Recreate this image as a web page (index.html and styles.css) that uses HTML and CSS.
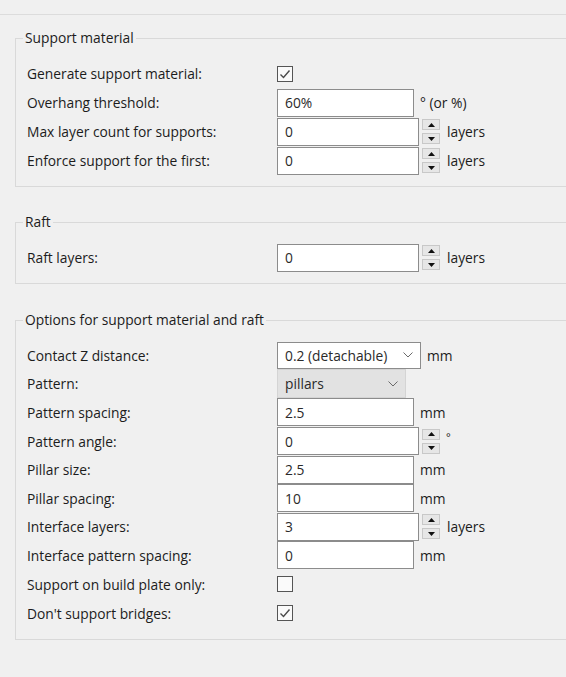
FILE: index.html
```html
<!DOCTYPE html>
<html>
<head>
<meta charset="utf-8">
<link rel="stylesheet" href="styles.css">
</head>
<body>
<div class="topbar"></div>
<main class="page">
  <fieldset class="group g1">
    <legend>Support material</legend>
    <div class="row"><span class="label">Generate support material:</span><span class="ctrl"><span class="check"><svg width="14" height="14" viewBox="0 0 14 14"><path d="M2.5 7.5 L5.5 10.5 L11.5 3.5" fill="none" stroke="#4a4a4a" stroke-width="1.4"/></svg></span></span></div>
    <div class="row"><span class="label">Overhang threshold:</span><span class="ctrl"><span class="field">60%</span><span class="unit">° (or %)</span></span></div>
    <div class="row"><span class="label">Max layer count for supports:</span><span class="ctrl"><span class="field wide">0</span><span class="spin"><b><svg width="7" height="4" viewBox="0 0 7 4"><path d="M0 4 L3.5 0 L7 4Z" fill="#111"/></svg></b><b><svg width="7" height="4" viewBox="0 0 7 4"><path d="M0 0 L3.5 4 L7 0Z" fill="#111"/></svg></b></span><span class="unit">layers</span></span></div>
    <div class="row"><span class="label">Enforce support for the first:</span><span class="ctrl"><span class="field wide">0</span><span class="spin"><b><svg width="7" height="4" viewBox="0 0 7 4"><path d="M0 4 L3.5 0 L7 4Z" fill="#111"/></svg></b><b><svg width="7" height="4" viewBox="0 0 7 4"><path d="M0 0 L3.5 4 L7 0Z" fill="#111"/></svg></b></span><span class="unit">layers</span></span></div>
  </fieldset>

  <fieldset class="group g2">
    <legend>Raft</legend>
    <div class="row"><span class="label">Raft layers:</span><span class="ctrl"><span class="field wide">0</span><span class="spin"><b><svg width="7" height="4" viewBox="0 0 7 4"><path d="M0 4 L3.5 0 L7 4Z" fill="#111"/></svg></b><b><svg width="7" height="4" viewBox="0 0 7 4"><path d="M0 0 L3.5 4 L7 0Z" fill="#111"/></svg></b></span><span class="unit">layers</span></span></div>
  </fieldset>

  <fieldset class="group g3">
    <legend>Options for support material and raft</legend>
    <div class="row tight"><span class="label">Contact Z distance:</span><span class="ctrl"><span class="select">0.2 (detachable)<svg width="10" height="6" viewBox="0 0 10 6"><path d="M0.5 0.5 L5 5 L9.5 0.5" fill="none" stroke="#6a6a6a" stroke-width="1"/></svg></span><span class="unit">mm</span></span></div>
    <div class="row tight"><span class="label">Pattern:</span><span class="ctrl"><span class="select flat">pillars<svg width="10" height="6" viewBox="0 0 10 6"><path d="M0.5 0.5 L5 5 L9.5 0.5" fill="none" stroke="#6a6a6a" stroke-width="1"/></svg></span></span></div>
    <div class="row tight"><span class="label">Pattern spacing:</span><span class="ctrl"><span class="field">2.5</span><span class="unit">mm</span></span></div>
    <div class="row tight"><span class="label">Pattern angle:</span><span class="ctrl"><span class="field wide">0</span><span class="spin"><b><svg width="7" height="4" viewBox="0 0 7 4"><path d="M0 4 L3.5 0 L7 4Z" fill="#111"/></svg></b><b><svg width="7" height="4" viewBox="0 0 7 4"><path d="M0 0 L3.5 4 L7 0Z" fill="#111"/></svg></b></span><span class="unit deg">°</span></span></div>
    <div class="row tight"><span class="label">Pillar size:</span><span class="ctrl"><span class="field">2.5</span><span class="unit">mm</span></span></div>
    <div class="row tight"><span class="label">Pillar spacing:</span><span class="ctrl"><span class="field">10</span><span class="unit">mm</span></span></div>
    <div class="row tight"><span class="label">Interface layers:</span><span class="ctrl"><span class="field wide">3</span><span class="spin"><b><svg width="7" height="4" viewBox="0 0 7 4"><path d="M0 4 L3.5 0 L7 4Z" fill="#111"/></svg></b><b><svg width="7" height="4" viewBox="0 0 7 4"><path d="M0 0 L3.5 4 L7 0Z" fill="#111"/></svg></b></span><span class="unit">layers</span></span></div>
    <div class="row tight"><span class="label">Interface pattern spacing:</span><span class="ctrl"><span class="field">0</span><span class="unit">mm</span></span></div>
    <div class="row"><span class="label">Support on build plate only:</span><span class="ctrl"><span class="check"></span></span></div>
    <div class="row"><span class="label">Don't support bridges:</span><span class="ctrl"><span class="check"><svg width="14" height="14" viewBox="0 0 14 14"><path d="M2.5 7.5 L5.5 10.5 L11.5 3.5" fill="none" stroke="#4a4a4a" stroke-width="1.4"/></svg></span></span></div>
  </fieldset>
</main>
</body>
</html>
```

FILE: styles.css
```css
html, body {
  margin: 0;
  padding: 0;
  background: #f0f0f0;
}
body {
  font-family: "Open Sans", "Noto Sans", sans-serif;
  font-size: 13.8px;
  color: #1c1c1c;
}
.topbar {
  height: 14px;
  border-bottom: 1px solid #dcdcdc;
}
.page {
  display: flex;
  flex-direction: column;
}
.group {
  margin: 0 0 0 15px;
  padding: 13px 0 11px 11px;
  border: 1px solid #d9d9d9;
  border-right: none;
  min-width: 0;
}
.group legend {
  line-height: 16px;
  padding: 0 2px;
  margin-left: -4px;
}
.g1 { margin-top: 15px; }
.g2 { margin-top: 27px; }
.g3 { margin-top: 28px; }
.row {
  display: flex;
  align-items: center;
  height: 29px;
}
.row.tight { height: 28.6px; }
.label {
  width: 250px;
  flex: none;
  white-space: nowrap;
}
.ctrl {
  display: flex;
  align-items: center;
}
.field {
  box-sizing: border-box;
  width: 137px;
  height: 28px;
  border: 1px solid #8c8c8c;
  background: #fff;
  padding-left: 7px;
  display: flex;
  align-items: center;
  color: #2a2a2a;
}
.field.wide { width: 142px; }
.spin {
  display: flex;
  flex-direction: column;
  gap: 3px;
  margin-left: 3px;
}
.spin b {
  box-sizing: border-box;
  width: 18px;
  height: 11px;
  background: #e6e6e6;
  border: 1px solid #c8c8c8;
  display: flex;
  align-items: center;
  justify-content: center;
}
.unit { margin-left: 6px; }
.spin + .unit { margin-left: 7px; }
.unit.deg { margin-left: 6px; align-self: flex-start; margin-top: 2px; font-size: 11px; }
.select {
  box-sizing: border-box;
  width: 144px;
  height: 27px;
  border: 1px solid #8c8c8c;
  background: #fff;
  padding: 0 7px;
  display: flex;
  align-items: center;
  justify-content: space-between;
  color: #2a2a2a;
}
.select.flat {
  width: 129px;
  height: 29px;
  background: #e2e2e2;
  border-color: #d4d4d4;
}
.check {
  box-sizing: border-box;
  width: 16px;
  height: 16px;
  border: 1px solid #555;
  background: #fafafa;
  display: flex;
  align-items: center;
  justify-content: center;
}
```
